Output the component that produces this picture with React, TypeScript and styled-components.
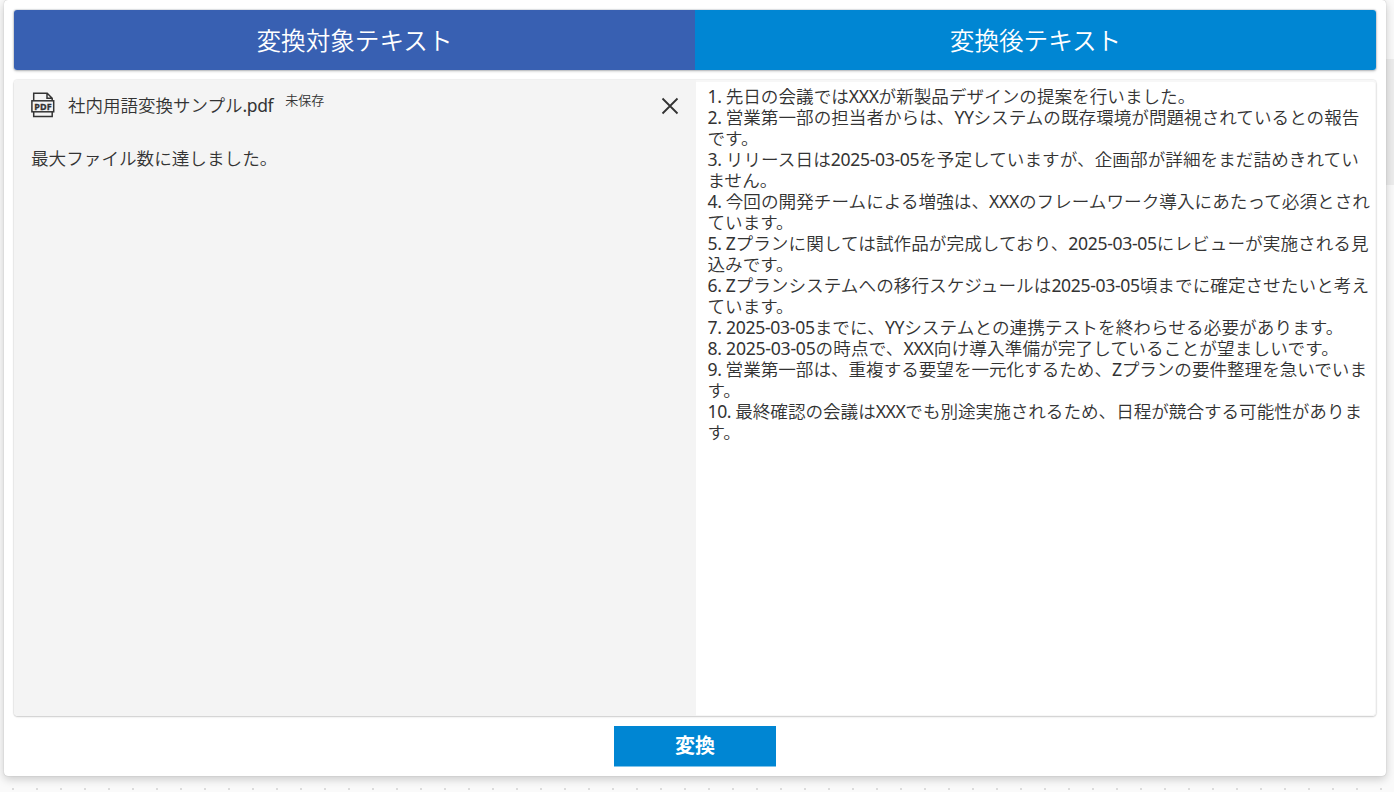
import React from "react";
import styled, { createGlobalStyle } from "styled-components";

const GlobalStyle = createGlobalStyle`
  *, *::before, *::after { box-sizing: border-box; }
  html, body { margin: 0; padding: 0; }
  body {
    height: 792px;
    overflow: hidden;
    color: #333;
    font-family: "Noto Sans", "Noto Sans CJK JP", sans-serif;
  }
`;

const Canvas = styled.div`
  display: flex;
  width: 1394px;
  height: 792px;
  padding: 0 0 16px 4px;
  background:
    linear-gradient(#ededed, #ededed) right 59px / 8px 126px no-repeat,
    #fafafa;
  position: relative;

  &::after {
    content: "";
    position: absolute;
    left: 12px;
    right: 0;
    bottom: 2px;
    height: 2px;
    background: repeating-linear-gradient(90deg, #dcdcdc 0 2px, transparent 2px 24px);
  }
`;

const Card = styled.main`
  display: flex;
  flex-direction: column;
  width: 1382px;
  height: 776px;
  padding: 10px;
  background: #fff;
  border-radius: 4px;
  box-shadow: 0 0 1px rgba(0, 0, 0, 0.3), 0 3px 10px rgba(0, 0, 0, 0.2);
`;

const Headings = styled.header`
  display: flex;
  height: 60px;
  flex: none;
  border-radius: 3px;
  overflow: hidden;
  box-shadow: 0 0 1px 1px rgba(60, 80, 100, 0.14), 0 1px 3px rgba(0, 0, 0, 0.25);
`;

const Heading = styled.h2<{ $color: string }>`
  display: flex;
  flex: 1;
  align-items: center;
  justify-content: center;
  margin: 0;
  padding-top: 2px;
  color: #fff;
  background: ${(p) => p.$color};
  font-size: 24.6px;
  line-height: 36px;
  font-weight: 350;
`;

const Panels = styled.section`
  display: flex;
  flex: none;
  height: 636px;
  margin-top: 10px;
  border-radius: 4px;
  background: #fff;
  box-shadow: 0 0 1px 0.5px rgba(0, 0, 0, 0.06), 0 1px 2px rgba(0, 0, 0, 0.16);
`;

const SourcePanel = styled.div`
  width: 682px;
  padding: 9px 17px 0 17px;
  background: #f4f4f4;
  border-radius: 4px 0 0 4px;
`;

const FileRow = styled.div`
  display: flex;
  align-items: center;
  height: 32px;
`;

const FileName = styled.span`
  margin-left: 13px;
  font-size: 17.5px;
  font-weight: 350;
  line-height: 24px;
  white-space: nowrap;
`;

const FileState = styled.span`
  margin: -10px auto 0 12px;
  font-size: 13px;
  font-weight: 350;
  line-height: 18px;
`;

const CloseButton = styled.button`
  display: flex;
  margin-top: 2px;
  padding: 0;
  border: 0;
  background: none;
  color: #333;
`;

const Notice = styled.p`
  margin: 25px 0 0;
  font-size: 17.6px;
  font-weight: 350;
  line-height: 24px;
`;

const ResultPanel = styled.div`
  flex: 1;
  padding: 3.6px 0 0 11.5px;
  border: 0 solid #f7f7f7;
  border-width: 2px 1px 1px 0;
  border-radius: 0 4px 4px 0;
`;

const Line = styled.div<{ $tracking: number }>`
  height: 21.06px;
  font-size: 17.6px;
  font-weight: 350;
  letter-spacing: ${(p) => p.$tracking}px;
  line-height: 21.06px;
  white-space: pre;
`;

const Latin = styled.span<{ $tracking?: number }>`
  font-weight: 400;
  letter-spacing: ${(p) => (p.$tracking ?? 0) - 0.4}px;
`;

const ConvertButton = styled.button`
  align-self: center;
  flex: none;
  width: 162px;
  height: 40px;
  margin-top: 10px;
  padding: 0 0 3px;
  border: 0;
  background: #0086d3;
  box-shadow: 0 1px 0 #80c3e9;
  color: #fff;
  font-family: inherit;
  font-size: 20px;
  font-weight: 700;
`;

const resultLines: { text: string; tracking?: number }[] = [
  { text: "1. 先日の会議ではXXXが新製品デザインの提案を行いました。" },
  { text: "2. 営業第一部の担当者からは、YYシステムの既存環境が問題視されているとの報告" },
  { text: "です。" },
  { text: "3. リリース日は2025-03-05を予定していますが、企画部が詳細をまだ詰めきれてい", tracking: 0.05 },
  { text: "ません。" },
  { text: "4. 今回の開発チームによる増強は、XXXのフレームワーク導入にあたって必須とされ", tracking: 0.03 },
  { text: "ています。" },
  { text: "5. Zプランに関しては試作品が完成しており、2025-03-05にレビューが実施される見", tracking: 0.06 },
  { text: "込みです。" },
  { text: "6. Zプランシステムへの移行スケジュールは2025-03-05頃までに確定させたいと考え", tracking: 0.05 },
  { text: "ています。" },
  { text: "7. 2025-03-05までに、YYシステムとの連携テストを終わらせる必要があります。", tracking: 0.09 },
  { text: "8. 2025-03-05の時点で、XXX向け導入準備が完了していることが望ましいです。", tracking: 0.15 },
  { text: "9. 営業第一部は、重複する要望を一元化するため、Zプランの要件整理を急いでいま", tracking: -0.03 },
  { text: "す。" },
  { text: "10. 最終確認の会議はXXXでも別途実施されるため、日程が競合する可能性がありま", tracking: -0.03 },
  { text: "す。" },
];

const ResultLine = ({ text, tracking = 0 }: { text: string; tracking?: number }) => (
  <Line $tracking={tracking}>
    {text.split(/([\x20-\x7e]+)/).map((part, i) =>
      i % 2 ? (
        <Latin key={i} $tracking={tracking}>
          {part}
        </Latin>
      ) : (
        part
      ),
    )}
  </Line>
);

const PdfIcon = () => (
  <svg width="24" height="26" viewBox="0 0 24 26" fill="none" stroke="#333" strokeWidth="1.5">
    <path d="M2.7 8.5V1.3H16.2L21.2 6.3V8.5M16 1.3V6.3H21.2" />
    <rect x="0.9" y="8.8" width="21.8" height="11" />
    <path d="M2.7 20V24.6H21.2V20" />
    <text
      x="3.2"
      y="17.6"
      fill="#333"
      stroke="#333"
      strokeWidth="0.3"
      fontFamily="'Noto Sans', sans-serif"
      fontSize="9"
      fontWeight="700"
      textLength="17.6"
    >
      PDF
    </text>
  </svg>
);

const CloseIcon = () => (
  <svg width="18" height="18" viewBox="0 0 18 18" stroke="currentColor" strokeWidth="1.8">
    <path d="M1.5 1.5 16.5 16.5M16.5 1.5 1.5 16.5" />
  </svg>
);

export default function App() {
  return (
    <>
      <GlobalStyle />
      <Canvas>
        <Card>
          <Headings>
            <Heading $color="#3860b2">変換対象テキスト</Heading>
            <Heading $color="#0086d3">変換後テキスト</Heading>
          </Headings>
          <Panels>
            <SourcePanel>
              <FileRow>
                <PdfIcon />
                <FileName>
                  社内用語変換サンプル<Latin>.pdf</Latin>
                </FileName>
                <FileState>未保存</FileState>
                <CloseButton aria-label="閉じる">
                  <CloseIcon />
                </CloseButton>
              </FileRow>
              <Notice>最大ファイル数に達しました。</Notice>
            </SourcePanel>
            <ResultPanel>
              {resultLines.map((line, i) => (
                <ResultLine key={i} text={line.text} tracking={line.tracking} />
              ))}
            </ResultPanel>
          </Panels>
          <ConvertButton>変換</ConvertButton>
        </Card>
      </Canvas>
    </>
  );
}
